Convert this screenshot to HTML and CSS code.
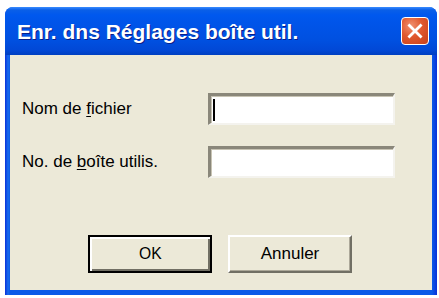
FILE: index.html
```html
<!DOCTYPE html>
<html lang="fr">
<head>
<meta charset="utf-8">
<title>Enr. dns Réglages boîte util.</title>
<link rel="stylesheet" href="styles.css">
</head>
<body>
<div class="window">
  <div class="titlebar">
    <span class="title">Enr. dns Réglages boîte util.</span>
    <span class="close">
      <svg viewBox="0 0 28 28" width="28" height="28" aria-hidden="true">
        <path d="M8 8 L20 20 M20 8 L8 20" stroke="#fff" stroke-width="3" stroke-linecap="square"/>
      </svg>
    </span>
  </div>
  <div class="client">
    <div class="form">
      <label class="label">Nom de <u>f</u>ichier</label>
      <div class="field"><span class="caret"></span></div>
      <label class="label">No. de <u>b</u>oîte utilis.</label>
      <div class="field"></div>
    </div>
    <div class="buttons">
      <div class="btn btn-default"><span>OK</span></div>
      <div class="btn"><span>Annuler</span></div>
    </div>
  </div>
</div>
</body>
</html>
```
FILE: styles.css
```css
html, body {
  margin: 0;
  padding: 0;
  background: #ffffff;
}
body {
  width: 439px;
  height: 298px;
  overflow: hidden;
}
.window {
  margin: 7px 0 0 5px;
  width: 432px;
  height: 288px;
  display: flex;
  flex-direction: column;
  background: linear-gradient(to right, #0831d9 0, #166aee 3px, #0a5ae8 5px, #0a5ae8 calc(100% - 5px), #0831d9 100%);
  border-radius: 8px 8px 0 0;
  box-sizing: border-box;
}
.titlebar {
  height: 48px;
  display: flex;
  align-items: center;
  justify-content: space-between;
  padding: 0 8px 0 12px;
  border-radius: 8px 8px 0 0;
  background: linear-gradient(to bottom, #3a8cff 0, #0a5fe8 3px, #0058ee 8px, #0055ea 30%, #0050e0 70%, #0148d6 90%, #003fc0 100%);
}
.title {
  font-family: "Liberation Sans", Arial, sans-serif;
  font-weight: bold;
  font-size: 21px;
  color: #ffffff;
  text-shadow: 1px 1px 0 #0a1e8a;
  padding-top: 2px;
}
.close {
  width: 28px;
  height: 28px;
  box-sizing: border-box;
  border: 1px solid #ffffff;
  border-radius: 4px;
  background: radial-gradient(circle at 35% 30%, #f09070 0, #e0582e 45%, #c8401a 100%);
  display: flex;
  align-items: center;
  justify-content: center;
}
.close svg {
  display: block;
}
.client {
  flex: 1;
  margin: 0 5px 5px 5px;
  background: #ece9d8;
  padding: 38px 0 0 12px;
  display: flex;
  flex-direction: column;
}
.form {
  display: grid;
  grid-template-columns: 186px 187px;
  grid-auto-rows: 32px;
  row-gap: 21px;
  align-items: center;
}
.label {
  font-family: "Liberation Sans", Arial, sans-serif;
  font-size: 17px;
  color: #000000;
}
.label u {
  text-decoration-thickness: 1px;
  text-underline-offset: 2px;
}
.field {
  height: 32px;
  box-sizing: border-box;
  background: #ffffff;
  border-top: 3px solid #8a877a;
  border-left: 3px solid #8a877a;
  border-bottom: 2px solid #f4f3ee;
  border-right: 2px solid #f4f3ee;
  box-shadow: inset 1px 1px 0 #c8c4b4;
  display: flex;
  align-items: center;
  padding-left: 2px;
}
.caret {
  width: 2px;
  height: 22px;
  background: #000000;
}
.buttons {
  display: flex;
  gap: 16px;
  margin-top: 57px;
  padding-left: 66px;
}
.btn {
  width: 124px;
  height: 38px;
  box-sizing: border-box;
  background: #ece9d8;
  border-top: 2px solid #ffffff;
  border-left: 2px solid #ffffff;
  border-right: 2px solid #716f64;
  border-bottom: 2px solid #716f64;
  box-shadow: inset -1px -1px 0 #aca899;
  display: flex;
  align-items: center;
  justify-content: center;
  font-family: "Liberation Sans", Arial, sans-serif;
  font-size: 17px;
  color: #000000;
}
.btn-default {
  border: 2px solid #000000;
  box-shadow: inset 2px 2px 0 #ffffff, inset -2px -2px 0 #716f64;
}
.btn-default span {
  transform: scaleX(0.92);
}
```
